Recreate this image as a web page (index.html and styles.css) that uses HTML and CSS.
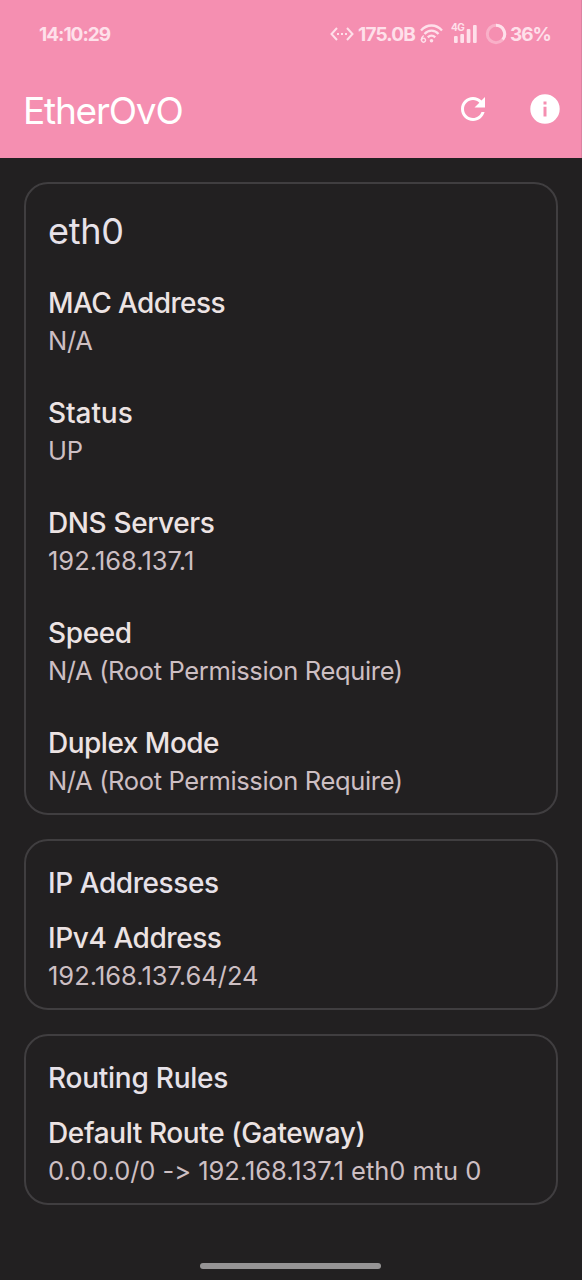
FILE: index.html
```html
<!DOCTYPE html>
<html lang="en">
<head>
<meta charset="utf-8">
<title>EtherOvO</title>
<link rel="stylesheet" href="styles.css">
</head>
<body>
<div class="screen">
  <header class="top">
    <div class="status-bar">
      <span class="clock">14:10:29</span>
      <div class="status-icons">
        <svg class="net" width="24" height="16" viewBox="0 0 24 16" fill="none" stroke="currentColor" stroke-width="2"><path d="M7 2L1.500 8L7 14M17 2L22.500 8L17 14"/><path d="M7 8h2M11 8h2M15 8h2"/></svg>
        <span class="rate">175.0B</span>
        <svg class="wifi" width="25" height="20" viewBox="0 0 25 20" fill="none" stroke="currentColor" stroke-width="2.300"><path d="M2 6.500C8-.2 17-.2 23 6.500M5.500 10C9.500 5.600 15.500 5.600 19.500 10M8.800 13.400C11 11 14 11 16.200 13.400"/><circle cx="12.500" cy="16.800" r="1.800" fill="currentColor" stroke="none"/><path stroke-width="1.400" d="M4.700 11.500Q2 13.500 2 16.200M4.600 14.200a2 2 0 1 1-.1 0"/></svg>
        <div class="cell">
          <svg width="27" height="20" viewBox="0 0 27 20" fill="currentColor"><rect x="3" y="12" width="3.700" height="7" rx="1"/><rect x="9.300" y="10" width="3.700" height="9" rx="1"/><rect x="15.700" y="5" width="3.700" height="14" rx="1"/><rect x="22" y="1" width="3.700" height="18" rx="1"/></svg>
          <span class="gen">4G</span>
        </div>
        <svg class="ring" width="22" height="22" viewBox="0 0 22 22" fill="none" stroke="currentColor" stroke-width="3"><circle cx="11" cy="11" r="8.700" opacity=".4"/><path d="M11 2.300A8.700 8.700 0 0 1 17.700 16.500"/></svg>
        <span class="pct">36%</span>
      </div>
    </div>
    <div class="app-bar">
      <h1 class="app-title">EtherOvO</h1>
      <div class="actions">
        <svg width="36" height="36" viewBox="0 0 24 24" fill="currentColor"><path d="M17.650 6.350C16.200 4.900 14.210 4 12 4c-4.420 0-7.990 3.580-7.990 8s3.570 8 7.990 8c3.730 0 6.840-2.550 7.730-6h-2.080c-.82 2.330-3.040 4-5.650 4-3.310 0-6-2.690-6-6s2.690-6 6-6c1.660 0 3.140.69 4.220 1.780L13 11h7V4l-2.350 2.350z"/></svg>
        <svg width="36" height="36" viewBox="0 0 24 24" fill="currentColor"><path d="M12 2.200a9.800 9.800 0 1 0 0 19.600 9.800 9.800 0 0 0 0-19.600zm1 14.800h-2v-6.500h2v6.500zm0-8h-2V7h2v2z"/></svg>
      </div>
    </div>
  </header>
  <main class="cards">
    <section class="card device">
      <h2 class="name">eth0</h2>
      <dl class="rows">
        <div><dt class="t-mac">MAC Address</dt><dd class="v-na">N/A</dd></div>
        <div><dt class="t-status">Status</dt><dd class="v-up">UP</dd></div>
        <div><dt class="t-dns">DNS Servers</dt><dd class="v-dns">192.168.137.1</dd></div>
        <div><dt class="t-speed">Speed</dt><dd class="v-root">N/A (Root Permission Require)</dd></div>
        <div><dt class="t-duplex">Duplex Mode</dt><dd class="v-root">N/A (Root Permission Require)</dd></div>
      </dl>
    </section>
    <section class="card">
      <h3 class="heading t-ip">IP Addresses</h3>
      <dl class="rows"><div><dt class="t-ipv4">IPv4 Address</dt><dd class="v-ipv4">192.168.137.64/24</dd></div></dl>
    </section>
    <section class="card">
      <h3 class="heading t-routing">Routing Rules</h3>
      <dl class="rows"><div><dt class="t-default">Default Route (Gateway)</dt><dd class="v-route">0.0.0.0/0 -&gt; 192.168.137.1 eth0 mtu 0</dd></div></dl>
    </section>
  </main>
  <div class="home"></div>
</div>
</body>
</html>
```
FILE: styles.css
```css
* { box-sizing: border-box; margin: 0; padding: 0; }
body { font-family: Inter, "Liberation Sans", sans-serif; background: #222021; white-space: nowrap; }
svg { display: block; flex: none; }
.screen { width: 582px; height: 1280px; display: flex; flex-direction: column; overflow: hidden; }
.top { height: 158px; background: #f58fb1; color: #fff; flex: none; border-right: 1px solid #dc83a1; }
.status-bar { height: 68px; padding: 0 31px 0 39px; display: flex; align-items: center; justify-content: space-between; color: #fee0ea; font-size: 19px; font-weight: 650; }
.clock { letter-spacing: -1px; }
.status-icons { display: flex; align-items: center; }
.rate { margin-left: 4px; width: 58px; letter-spacing: -.8px; }
.wifi { margin-left: 3px; }
.cell { position: relative; margin-left: 7px; }
.gen { position: absolute; left: 0; top: -2px; font-size: 10px; line-height: 10px; letter-spacing: -.5px; }
.ring { margin-left: 7px; }
.pct { margin-left: 3px; width: 40px; letter-spacing: -1.1px; }
.app-bar { height: 84px; padding: 0 18px 0 23px; display: flex; align-items: center; justify-content: space-between; }
.app-title { font-size: 37px; font-weight: 400; letter-spacing: -1.2px; }
.actions { display: flex; gap: 36px; margin-top: -2px; }
.cards { padding: 24px 24px 0 24px; display: flex; flex-direction: column; gap: 24px; }
.card { border: 2px solid #403e40; border-radius: 24px; padding: 23px 22px 13px; color: #e7e2e9; }
.device { padding-top: 25px; }
.name { font-size: 36px; line-height: 44px; font-weight: 400; letter-spacing: -.3px; margin-bottom: 31px; }
.heading { font-size: 28px; line-height: 38px; font-weight: 500; margin-bottom: 17px; }
.rows { display: flex; flex-direction: column; gap: 34px; }
dt { font-size: 28px; line-height: 38px; font-weight: 500; color: #ece3e3; }
dd { font-size: 25.500px; line-height: 38px; color: #cdbfc3; }
.t-mac { letter-spacing: -.6px; }
.t-status { letter-spacing: -.08px; }
.t-dns { letter-spacing: -.38px; }
.t-speed { letter-spacing: -.38px; }
.t-duplex { letter-spacing: -.5px; }
.t-ip { letter-spacing: -.43px; }
.t-ipv4 { letter-spacing: -.43px; }
.t-routing { letter-spacing: -.25px; }
.t-default { letter-spacing: -.38px; }
.v-na, .v-up { letter-spacing: -.3px; }
.v-root { letter-spacing: -.35px; }
.v-dns, .v-ipv4 { letter-spacing: 0; }
.v-route { font-feature-settings: "calt" 0; letter-spacing: -.04px; }
.home { width: 181px; height: 6px; border-radius: 3px; background: #969495; margin: auto auto 11px 200px; }
```
